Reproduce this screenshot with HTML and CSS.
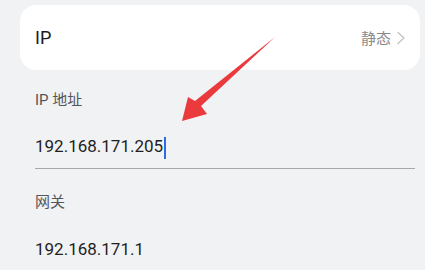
FILE: index.html
```html
<!DOCTYPE html>
<html lang="zh-CN">
<head>
<meta charset="UTF-8">
<meta name="viewport" content="width=device-width, initial-scale=1.0">
<title>IP 设置</title>
<link rel="stylesheet" href="styles.css">
</head>
<body>
  <!-- IP mode row -->
  <div class="card">
    <span class="card-title">IP</span>
    <span class="card-value">静态
      <svg class="chevron" width="10" height="14" viewBox="0 0 10 14"><path d="M2 1.5 L8 7 L2 12.5" fill="none" stroke="#c4c5c8" stroke-width="1.4" stroke-linecap="round" stroke-linejoin="round"/></svg>
    </span>
  </div>

  <div class="form">
    <div class="field-label">IP 地址</div>
    <div class="field-value editing">192.168.171.205<span class="cursor"></span></div>
    <div class="field-label second">网关</div>
    <div class="field-value last">192.168.171.1</div>
  </div>

  <!-- Annotation arrow -->
  <svg class="arrow" width="425" height="270" viewBox="0 0 425 270">
    <polygon points="275,37 201,106 207,114 182,121 188,97 195,101" fill="#ea3a3e"/>
  </svg>
</body>
</html>
```

FILE: styles.css
```css
body {
  margin: 0;
  padding-top: 5px;
  background-color: #f1f2f4;
  font-family: Roboto, "Noto Sans CJK SC", sans-serif;
  overflow: hidden;
}

.card {
  display: flex;
  align-items: center;
  justify-content: space-between;
  height: 65px;
  margin: 0 5px 0 20px;
  padding: 0 14px 0 15px;
  background-color: #ffffff;
  border-radius: 16px;
}

.card-title {
  font-size: 18px;
  color: #1a1a1a;
}

.card-value {
  display: flex;
  align-items: center;
  gap: 5px;
  font-size: 15px;
  color: #8a8b8d;
}

.form {
  padding: 0 10px 0 35px;
}

.field-label {
  margin-top: 10px;
  height: 40px;
  line-height: 40px;
  font-size: 15px;
  color: #555658;
}

.field-label.second {
  margin-top: 13px;
}

.field-value {
  margin-top: 6px;
  height: 40px;
  line-height: 40px;
  font-size: 17px;
  color: #1f1f1f;
}

.field-value.editing {
  padding-bottom: 2px;
  border-bottom: 1.5px solid #a6a7a9;
}

.field-value.last {
  margin-top: 7px;
}

.cursor {
  display: inline-block;
  width: 2px;
  height: 22px;
  margin-left: 1px;
  vertical-align: middle;
  background-color: #2f6ae8;
}

.arrow {
  position: absolute;
  top: 0;
  left: 0;
  pointer-events: none;
}
```
